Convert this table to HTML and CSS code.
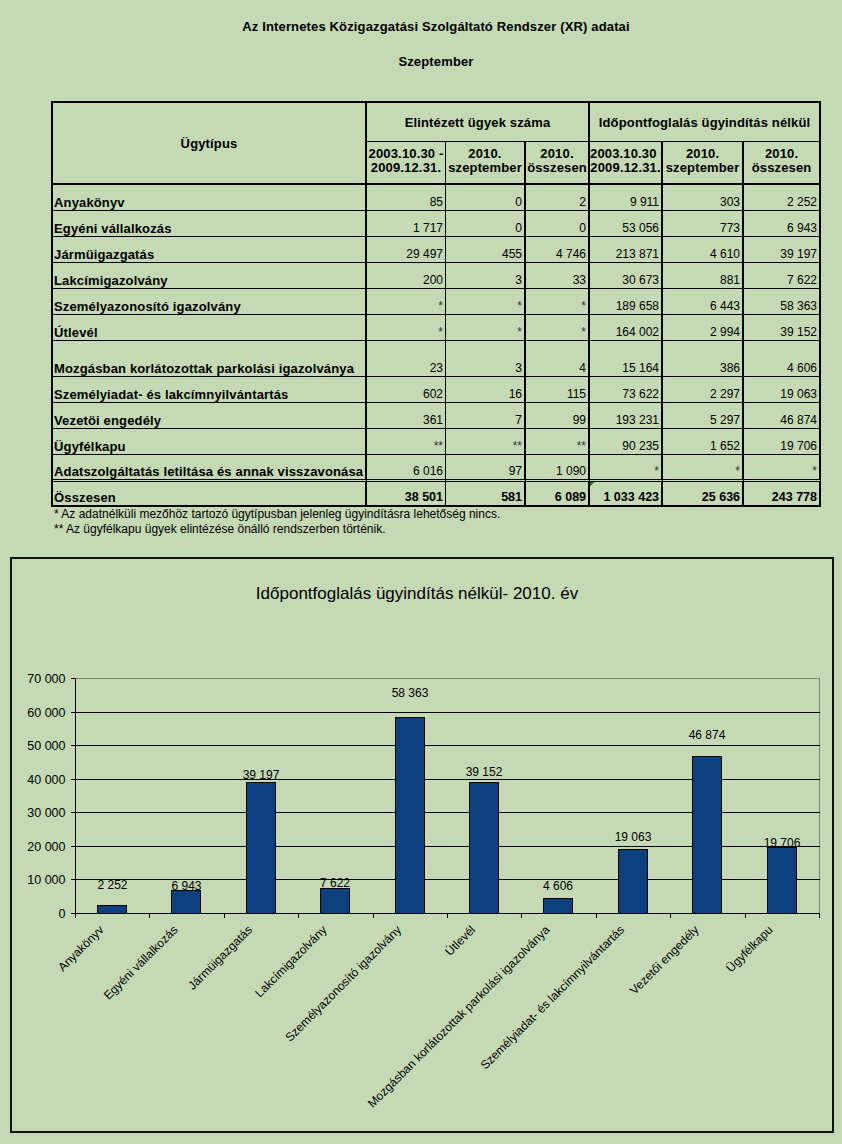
FILE: index.html
```html
<!DOCTYPE html>
<html lang="hu">
<head>
<meta charset="utf-8">
<title>Az Internetes Közigazgatási Szolgáltató Rendszer (XR) adatai</title>
<link rel="stylesheet" href="styles.css">
</head>
<body>
<div class="page">
  <section class="report">
    <h1 class="title">Az Internetes Közigazgatási Szolgáltató Rendszer (XR) adatai</h1>
    <h2 class="title subtitle">Szeptember</h2>
    <table class="data">
      <colgroup>
        <col class="c0"><col class="c1"><col class="c2"><col class="c3"><col class="c4"><col class="c5"><col class="c6">
      </colgroup>
      <thead>
        <tr class="hr1">
          <th rowspan="2" class="type-h">Ügytípus</th>
          <th colspan="3" class="grp">Elintézett ügyek száma</th>
          <th colspan="3" class="grp">Időpontfoglalás ügyindítás nélkül</th>
        </tr>
        <tr class="hr2">
          <th class="thin">2003.10.30 -<br>2009.12.31.</th>
          <th>2010.<br>szeptember</th>
          <th>2010.<br>összesen</th>
          <th>2003.10.30 -<br>2009.12.31.</th>
          <th>2010.<br>szeptember</th>
          <th>2010.<br>összesen</th>
        </tr>
      </thead>
      <tbody>
        <tr><th>Anyakönyv</th><td class="thin">85</td><td>0</td><td>2</td><td>9 911</td><td>303</td><td>2 252</td></tr>
        <tr><th>Egyéni vállalkozás</th><td class="thin">1 717</td><td>0</td><td>0</td><td>53 056</td><td>773</td><td>6 943</td></tr>
        <tr><th>Jármüigazgatás</th><td class="thin">29 497</td><td>455</td><td>4 746</td><td>213 871</td><td>4 610</td><td>39 197</td></tr>
        <tr><th>Lakcímigazolvány</th><td class="thin">200</td><td>3</td><td>33</td><td>30 673</td><td>881</td><td>7 622</td></tr>
        <tr><th>Személyazonosító igazolvány</th><td class="thin star">*</td><td class="star">*</td><td class="star">*</td><td>189 658</td><td>6 443</td><td>58 363</td></tr>
        <tr><th>Útlevél</th><td class="thin star">*</td><td class="star">*</td><td class="star">*</td><td>164 002</td><td>2 994</td><td>39 152</td></tr>
        <tr class="tall"><th>Mozgásban korlátozottak parkolási igazolványa</th><td class="thin">23</td><td>3</td><td>4</td><td>15 164</td><td>386</td><td>4 606</td></tr>
        <tr><th>Személyiadat- és lakcímnyilvántartás</th><td class="thin">602</td><td>16</td><td>115</td><td>73 622</td><td>2 297</td><td>19 063</td></tr>
        <tr><th>Vezetöi engedély</th><td class="thin">361</td><td>7</td><td>99</td><td>193 231</td><td>5 297</td><td>46 874</td></tr>
        <tr><th>Ügyfélkapu</th><td class="thin star">**</td><td class="star">**</td><td class="star">**</td><td>90 235</td><td>1 652</td><td>19 706</td></tr>
        <tr class="last"><th>Adatszolgáltatás letiltása és annak visszavonása</th><td class="thin">6 016</td><td>97</td><td>1 090</td><td class="star">*</td><td class="star">*</td><td class="star">*</td></tr>
      </tbody>
      <tfoot>
        <tr class="total"><th>Összesen</th><td class="thin">38 501</td><td>581</td><td>6 089</td><td class="flag">1 033 423</td><td>25 636</td><td>243 778</td></tr>
      </tfoot>
    </table>
    <p class="notes">* Az adatnélküli mezőhöz tartozó ügytípusban jelenleg ügyindításra lehetőség nincs.<br>** Az ügyfélkapu ügyek elintézése önálló rendszerben történik.</p>
  </section>

  <svg class="chart" width="824" height="576" viewBox="10 557 824 576" xmlns="http://www.w3.org/2000/svg">
    <rect x="11" y="558" width="822" height="574" fill="none" stroke="#111" stroke-width="2"/>
    <text class="ctitle" x="417" y="598.5" text-anchor="middle">Időpontfoglalás ügyindítás nélkül- 2010. év</text>

    <g class="grid" shape-rendering="crispEdges">
      <line x1="75.5" y1="678.5" x2="819.5" y2="678.5" stroke="#808080"/>
      <line x1="819.5" y1="678.5" x2="819.5" y2="913.5" stroke="#808080"/>
      <line x1="75.5" y1="712.5" x2="819.5" y2="712.5" stroke="#000"/>
      <line x1="75.5" y1="745.5" x2="819.5" y2="745.5" stroke="#000"/>
      <line x1="75.5" y1="779.5" x2="819.5" y2="779.5" stroke="#000"/>
      <line x1="75.5" y1="812.5" x2="819.5" y2="812.5" stroke="#000"/>
      <line x1="75.5" y1="846.5" x2="819.5" y2="846.5" stroke="#000"/>
      <line x1="75.5" y1="879.5" x2="819.5" y2="879.5" stroke="#000"/>
    </g>

    <g class="bars" fill="#0c407e" stroke="#000" stroke-width="1" shape-rendering="crispEdges">
      <rect x="97.5" y="905.5" width="29" height="8"/>
      <rect x="171.5" y="890.5" width="29" height="23"/>
      <rect x="246.5" y="782.5" width="29" height="131"/>
      <rect x="320.5" y="888.5" width="29" height="25"/>
      <rect x="395.5" y="717.5" width="29" height="196"/>
      <rect x="469.5" y="782.5" width="29" height="131"/>
      <rect x="543.5" y="898.5" width="29" height="15"/>
      <rect x="618.5" y="849.5" width="29" height="64"/>
      <rect x="692.5" y="756.5" width="29" height="157"/>
      <rect x="767.5" y="847.5" width="29" height="66"/>
    </g>

    <g class="axes" stroke="#000" shape-rendering="crispEdges">
      <line x1="75.5" y1="678.5" x2="75.5" y2="913.5"/>
      <line x1="71" y1="913.5" x2="819.5" y2="913.5"/>
      <line x1="71" y1="678.5" x2="75.5" y2="678.5"/>
      <line x1="71" y1="712.5" x2="75.5" y2="712.5"/>
      <line x1="71" y1="745.5" x2="75.5" y2="745.5"/>
      <line x1="71" y1="779.5" x2="75.5" y2="779.5"/>
      <line x1="71" y1="812.5" x2="75.5" y2="812.5"/>
      <line x1="71" y1="846.5" x2="75.5" y2="846.5"/>
      <line x1="71" y1="879.5" x2="75.5" y2="879.5"/>
      <line x1="75.5" y1="913.5" x2="75.5" y2="918"/>
      <line x1="149.5" y1="913.5" x2="149.5" y2="918"/>
      <line x1="224.5" y1="913.5" x2="224.5" y2="918"/>
      <line x1="298.5" y1="913.5" x2="298.5" y2="918"/>
      <line x1="373.5" y1="913.5" x2="373.5" y2="918"/>
      <line x1="447.5" y1="913.5" x2="447.5" y2="918"/>
      <line x1="521.5" y1="913.5" x2="521.5" y2="918"/>
      <line x1="596.5" y1="913.5" x2="596.5" y2="918"/>
      <line x1="670.5" y1="913.5" x2="670.5" y2="918"/>
      <line x1="745.5" y1="913.5" x2="745.5" y2="918"/>
      <line x1="819.5" y1="913.5" x2="819.5" y2="918"/>
    </g>

    <g class="ylabels" text-anchor="end">
      <text x="65.5" y="683">70 000</text>
      <text x="65.5" y="717">60 000</text>
      <text x="65.5" y="750">50 000</text>
      <text x="65.5" y="784">40 000</text>
      <text x="65.5" y="817">30 000</text>
      <text x="65.5" y="851">20 000</text>
      <text x="65.5" y="884">10 000</text>
      <text x="65.5" y="918">0</text>
    </g>

    <g class="vlabels" text-anchor="middle">
      <text x="112.5" y="888.5">2 252</text>
      <text x="186.5" y="890">6 943</text>
      <text x="261" y="778.5">39 197</text>
      <text x="335" y="887">7 622</text>
      <text x="410" y="697">58 363</text>
      <text x="484" y="776">39 152</text>
      <text x="558" y="890">4 606</text>
      <text x="633" y="841">19 063</text>
      <text x="707" y="738.5">46 874</text>
      <text x="782" y="847">19 706</text>
    </g>

    <g class="xlabels" text-anchor="end">
      <text transform="translate(104.5 930.5) rotate(-45)">Anyakönyv</text>
      <text transform="translate(178.5 930.5) rotate(-45)">Egyéni vállalkozás</text>
      <text transform="translate(253 930.5) rotate(-45)">Jármüigazgatás</text>
      <text transform="translate(327.5 930.5) rotate(-45)">Lakcímigazolvány</text>
      <text transform="translate(402 930.5) rotate(-45)">Személyazonosító igazolvány</text>
      <text transform="translate(476 930.5) rotate(-45)">Útlevél</text>
      <text transform="translate(550.5 930.5) rotate(-45)">Mozgásban korlátozottak parkolási igazolványa</text>
      <text transform="translate(625 930.5) rotate(-45)">Személyiadat- és lakcímnyilvántartás</text>
      <text transform="translate(699.5 930.5) rotate(-45)">Vezetői engedély</text>
      <text transform="translate(773.5 930.5) rotate(-45)">Ügyfélkapu</text>
    </g>
  </svg>
</div>
</body>
</html>
```

FILE: styles.css
```css
* {
  box-sizing: border-box;
}

html,
body {
  margin: 0;
  padding: 0;
}

body {
  width: 842px;
  height: 1144px;
  overflow: hidden;
  background: #c5d9b5;
  color: #000;
  font-family: "Liberation Sans", Arial, sans-serif;
}

.page {
  padding-top: 19px;
}

.report {
  margin-left: 51px;
  width: 770px;
}

.title {
  margin: 0;
  font-size: 13px;
  line-height: 15px;
  font-weight: bold;
  text-align: center;
  letter-spacing: 0.15px;
}

.subtitle {
  margin-top: 20px;
}

/* ---------- table ---------- */

.data {
  margin-top: 32px;
  width: 770px;
  table-layout: fixed;
  border-collapse: separate;
  border-spacing: 0;
  border-left: 2px solid #000;
  border-top: 2px solid #000;
}

.c0 { width: 314px; }
.c1 { width: 79px; }
.c2 { width: 80px; }
.c3 { width: 64px; }
.c4 { width: 73px; }
.c5 { width: 81px; }
.c6 { width: 77px; }

.data th,
.data td {
  padding: 0 2px 0 1px;
  border-right: 2px solid #000;
  border-bottom: 1px solid #000;
  white-space: nowrap;
  overflow: hidden;
  vertical-align: bottom;
  line-height: 15px;
}

.data th {
  font-size: 13px;
  font-weight: bold;
  letter-spacing: 0.15px;
  text-align: left;
}

.data td {
  font-size: 12px;
  text-align: right;
}

.data .thin {
  border-right-width: 1px;
}

.data td.star {
  color: #333;
}

.data tbody tr {
  height: 26px;
}

.data tbody tr.tall {
  height: 36px;
}

.data tbody tr.last {
  height: 27px;
}

.data tbody tr.last th,
.data tbody tr.last td {
  border-bottom: 3px double #000;
}

/* header */

.data thead th {
  text-align: center;
  padding: 0;
}

.data .hr1 {
  height: 39px;
}

.data .hr1 th {
  vertical-align: middle;
}

.data .hr1 .type-h {
  border-bottom: 2px solid #000;
}

.data .hr2 {
  height: 43px;
}

.data .hr2 th {
  vertical-align: top;
  padding-top: 5px;
  line-height: 13.5px;
  border-bottom: 2px solid #000;
}

/* total */

.data .total {
  height: 25px;
}

.data .total th,
.data .total td {
  border-bottom: 2px solid #000;
  font-weight: bold;
}

.data .total td {
  font-size: 12.5px;
}

.data .flag {
  background: linear-gradient(135deg, #1f7a2a 50%, transparent 50%) 0 0 / 5px 5px no-repeat;
}

.notes {
  margin: 0;
  padding-left: 3px;
  font-size: 12px;
  line-height: 15px;
}

/* ---------- chart ---------- */

.chart {
  display: block;
  margin: 20px 0 0 10px;
  font-family: "Liberation Sans", Arial, sans-serif;
}

.ctitle {
  font-size: 17px;
}

.ylabels text {
  font-size: 12.5px;
}

.vlabels text {
  font-size: 12px;
}

.xlabels text {
  font-size: 12px;
}
```
